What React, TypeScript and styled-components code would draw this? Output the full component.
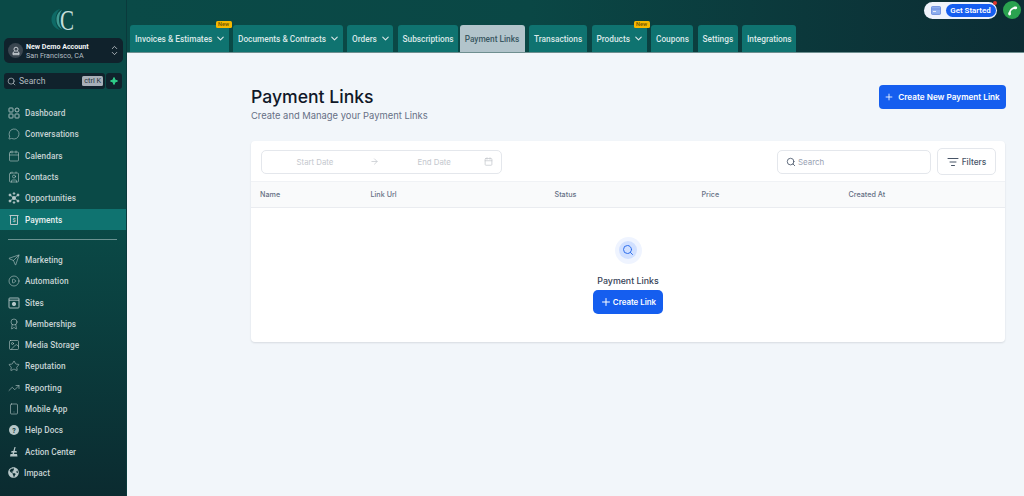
import React from "react";
import styled, { createGlobalStyle } from "styled-components";
import {
  MessageCircle, Calendar, Contact, Send, CirclePlay, Award, Image, Star,
  TrendingUp, Smartphone, ChevronDown, ChevronUp, Search, Plus, ArrowRight, ListFilter,
} from "lucide-react";
import { FaGlobeAmericas } from "react-icons/fa";

const Global = createGlobalStyle`
  html, body { margin: 0; padding: 0; height: 100%; }
  body { font-family: "Inter", "Liberation Sans", sans-serif; background: #f2f6fa; overflow: hidden; }
  #root { height: 100%; }
  * { box-sizing: border-box; }
`;

const Page = styled.div`
  display: grid;
  grid-template-columns: 127px 1fr;
  width: 1024px;
  height: 496px;
`;
const Sidebar = styled.aside`
  display: flex;
  flex-direction: column;
  background: linear-gradient(180deg, #0a4a47 0%, #0a4a47 45%, #0b2b30 100%);
  border-right: 1px solid #0a3a3c;
`;
const LogoBox = styled.div`
  height: 38px;
  display: flex;
  justify-content: center;
  padding: 1px 0 0 0;
`;
const Account = styled.div`
  margin: 0 4px;
  height: 25px;
  width: 119px;
  background: #10222c;
  border-radius: 5px;
  display: flex;
  align-items: center;
  padding: 0 4px;
  gap: 3px;
`;
const Avatar = styled.div`
  width: 15px;
  height: 15px;
  border-radius: 50%;
  background: #3a4650;
  color: #d8dee2;
  display: flex;
  align-items: center;
  justify-content: center;
  flex: none;
`;
const AccountText = styled.div`
  flex: 1;
  min-width: 0;
  font-family: "Roboto", sans-serif;
  line-height: 9px;
`;
const AccountName = styled.div`
  font-size: 7.1px;
  font-weight: 700;
  color: #f2f5f6;
  white-space: nowrap;
`;
const AccountCity = styled.div`
  font-size: 7.2px;
  color: #b4bfc4;
  white-space: nowrap;
`;
const Stepper = styled.div`
  display: flex;
  flex-direction: column;
  color: #d4dadd;
  svg { margin: -1.5px 0; }
`;
const SearchRow = styled.div`
  margin: 10px 4px 0;
  display: flex;
  gap: 1px;
  height: 16px;
`;
const SideSearch = styled.div`
  width: 102px;
  background: #10222c;
  border-radius: 3px;
  display: flex;
  align-items: center;
  padding: 0 2px 0 3px;
  gap: 3px;
  color: #b0babf;
  font: 400 8.6px "Roboto", sans-serif;
`;
const SearchLabel = styled.span`
  flex: 1;
`;
const Kbd = styled.span`
  background: #a8afb8;
  color: #27313a;
  border-radius: 1.5px;
  font-size: 7.3px;
  line-height: 10px;
  padding: 0 2px;
  white-space: nowrap;
`;
const Spark = styled.div`
  width: 16px;
  background: #10222c;
  border-radius: 3px;
  display: flex;
  align-items: center;
  justify-content: center;
`;
const Nav = styled.nav`
  margin-top: 13.5px;
  display: flex;
  flex-direction: column;
`;
const NavItem = styled.div<{ $active?: boolean }>`
  height: 21.3px;
  display: flex;
  align-items: center;
  padding-left: 8px;
  gap: 5px;
  font: 500 8.25px "Roboto", sans-serif;
  letter-spacing: 0.05px;
  color: ${(p) => (p.$active ? "#e8f0f0" : "#c5d2d3")};
  background: ${(p) => (p.$active ? "#0f7370" : "transparent")};
  svg { flex: none; color: #b7c7c8; }
`;
const Divider = styled.hr`
  margin: 9px 9px 9px 8px;
  border: 0;
  height: 1px;
  background: #6b9291;
`;
const Main = styled.main`
  display: flex;
  flex-direction: column;
  min-width: 0;
`;
const Topbar = styled.header`
  height: 53px;
  background: linear-gradient(90deg, #0a4a47 0%, #0a4745 45%, #0c2c33 100%);
  border-bottom: 1px solid #6f8f90;
  display: flex;
  align-items: flex-end;
  position: relative;
  padding-left: 3px;
`;
const Tabs = styled.div`
  display: flex;
  gap: 4.5px;
`;
const Tab = styled.div<{ $active?: boolean; $w: number }>`
  position: relative;
  width: ${(p) => p.$w}px;
  height: 27px;
  margin-left: ${(p) => (p.$active ? -2.5 : 0)}px;
  border-radius: 3px 3px 0 0;
  background: ${(p) => (p.$active ? "#b2c4cb" : "#0f7370")};
  color: ${(p) => (p.$active ? "#3a5862" : "#dbe8e8")};
  font: 500 8.3px "Roboto", sans-serif;
  display: flex;
  align-items: center;
  justify-content: ${(p) => (p.$active ? "center" : "flex-start")};
  padding-left: ${(p) => (p.$active ? 0 : 5)}px;
  gap: 3px;
  white-space: nowrap;
  svg { flex: none; }
`;
const NewBadge = styled.span`
  position: absolute;
  top: -4px;
  right: -3px;
  width: 16px;
  height: 7px;
  background: #f5b800;
  color: #6b5200;
  border-radius: 1.5px;
  font-size: 5.5px;
  line-height: 7px;
  text-align: center;
`;
const TopActions = styled.div`
  position: absolute;
  top: 1px;
  right: 3px;
  display: flex;
  align-items: center;
  gap: 6px;
`;
const StartPill = styled.div`
  position: relative;
  height: 17px;
  width: 73px;
  background: #eef3fb;
  border-radius: 9px;
  display: flex;
  align-items: center;
  justify-content: space-between;
  padding: 0 1.5px 0 7px;
  color: #5b7fd8;
`;
const StartButton = styled.span`
  height: 13px;
  width: 50px;
  border-radius: 7px;
  background: #155eef;
  color: #fff;
  font: 600 7.9px "Roboto", sans-serif;
  text-align: center;
  line-height: 13px;
`;
const RedDot = styled.span`
  position: absolute;
  top: -1px;
  right: 0;
  width: 4px;
  height: 4px;
  border-radius: 50%;
  background: #e0342c;
`;
const CallButton = styled.div`
  width: 18px;
  height: 18px;
  border-radius: 50%;
  background: #2aa24f;
  color: #fff;
  display: flex;
  align-items: center;
  justify-content: center;
`;
const Content = styled.div`
  padding: 33px 19px 0 124px;
  display: flex;
  flex-direction: column;
`;
const Head = styled.div`
  display: flex;
  justify-content: space-between;
  align-items: flex-start;
  height: 55px;
`;
const TitleBlock = styled.div`
  display: flex;
  flex-direction: column;
`;
const Title = styled.h1`
  margin: 0;
  font-size: 17.6px;
  line-height: 22px;
  font-weight: 500;
  color: #101828;
`;
const Subtitle = styled.p`
  margin: 1px 0 0;
  font-size: 9.4px;
  line-height: 13px;
  color: #667085;
`;
const PrimaryButton = styled.button`
  display: inline-flex;
  align-items: center;
  justify-content: center;
  border: 0;
  padding: 0;
  background: #155eef;
  color: #fff;
  font-family: inherit;
  font-weight: 600;
  border-radius: 4px;
  white-space: nowrap;
`;
const CreateNew = styled(PrimaryButton)`
  width: 127px;
  height: 24px;
  gap: 4px;
  font-size: 8.2px;
  margin: -1px -0.5px 0 0;
`;
const Card = styled.section`
  height: 201px;
  background: #fff;
  border-radius: 4px;
  box-shadow: 0 1px 2px rgba(16, 24, 40, 0.12);
  display: flex;
  flex-direction: column;
`;
const Toolbar = styled.div`
  height: 40px;
  display: flex;
  align-items: center;
  padding: 1px 9px 0 9.5px;
`;
const DateRange = styled.div`
  width: 241.5px;
  height: 24px;
  border: 1px solid #e4e7ec;
  border-radius: 5px;
  display: grid;
  grid-template-columns: 107px 12px 95px 1fr;
  align-items: center;
  padding-right: 8px;
  color: #c4c8ce;
  font-size: 7.8px;
  svg:last-child { justify-self: end; }
`;
const DateText = styled.span`
  text-align: center;
`;
const EndText = styled.span`
  padding-left: 37px;
  white-space: nowrap;
`;
const ArrowCell = styled.span`
  display: flex;
  justify-content: center;
`;
const ToolbarSpacer = styled.div`
  flex: 1;
`;
const TableSearch = styled.div`
  width: 154px;
  height: 24px;
  border: 1px solid #e4e7ec;
  border-radius: 5px;
  display: flex;
  align-items: center;
  padding-left: 8px;
  gap: 2px;
  color: #98a2b3;
  font-size: 7.9px;
  margin-right: 6px;
  svg { color: #475467; }
`;
const FilterButton = styled.div`
  width: 59px;
  height: 27px;
  border: 1px solid #e4e7ec;
  border-radius: 5px;
  display: flex;
  align-items: center;
  justify-content: center;
  gap: 3px;
  color: #475467;
  font-size: 8.4px;
  font-weight: 500;
`;
const TableHead = styled.div`
  height: 27px;
  background: #f9fafb;
  border-top: 1px solid #f0f2f5;
  border-bottom: 1px solid #eaecf0;
  display: grid;
  grid-template-columns: 110.5px 184px 147px 147px 1fr;
  align-items: center;
  padding-left: 9px;
  font-size: 7.2px;
  font-weight: 500;
  color: #667085;
`;
const Empty = styled.div`
  display: flex;
  flex-direction: column;
  align-items: center;
  padding-top: 28.5px;
`;
const Halo = styled.div`
  width: 27px;
  height: 27px;
  border-radius: 50%;
  background: #eff4ff;
  display: flex;
  align-items: center;
  justify-content: center;
`;
const HaloInner = styled.div`
  width: 18px;
  height: 18px;
  border-radius: 50%;
  background: #d1e0ff;
  display: flex;
  align-items: center;
  justify-content: center;
  color: #2f6fed;
`;
const EmptyTitle = styled.div`
  margin-top: 11px;
  font-size: 8.8px;
  line-height: 12px;
  font-weight: 500;
  color: #344054;
`;
const CreateLink = styled(PrimaryButton)`
  margin-top: 3px;
  width: 70px;
  height: 24px;
  gap: 1px;
  font-size: 7.9px;
  border-radius: 5px;
`;

const Glyph = ({ children }: { children: React.ReactNode }) => (
  <svg width="12" height="12" viewBox="0 0 12 12" fill="none" stroke="currentColor" strokeWidth="0.9">{children}</svg>
);

const DashIcon = () => (
  <Glyph>
    <rect x="1" y="1" width="4" height="4" rx="0.6" />
    <circle cx="9" cy="3" r="2" />
    <rect x="1" y="7" width="4" height="4" rx="0.6" />
    <rect x="7" y="7" width="4" height="4" rx="0.6" />
  </Glyph>
);
const OppIcon = () => (
  <Glyph>
    <circle cx="6" cy="6" r="1.5" fill="currentColor" />
    <circle cx="2" cy="3" r="1" fill="currentColor" />
    <circle cx="2" cy="9" r="1" fill="currentColor" />
    <circle cx="10" cy="3" r="1" fill="currentColor" />
    <circle cx="10" cy="9" r="1" fill="currentColor" />
    <circle cx="6" cy="1.5" r="0.8" fill="currentColor" />
    <circle cx="6" cy="10.5" r="0.8" fill="currentColor" />
    <path d="M2 3 10 9M10 3 2 9" />
  </Glyph>
);
const PayIcon = () => (
  <svg width="12" height="12" viewBox="0 0 12 12" fill="none" stroke="currentColor" strokeWidth="1">
    <path d="M1.5 1.5h9M2.5 1.5v9h7v-9" />
    <text x="6" y="8.2" fontSize="5.5" textAnchor="middle" fill="currentColor" stroke="none" fontFamily="Roboto" fontWeight="700">$</text>
  </svg>
);
const ActionIcon = () => (
  <svg width="12" height="12" viewBox="0 0 12 12" fill="currentColor">
    <path d="M6.5 1 5.3 5H3.6L3 6.5h1.9L4.5 8H2.5L2 10.5h7.5L9 8H6l.4-1.5H9L8.5 5H6.7l.9-4Z" />
  </svg>
);
const HelpIcon = () => (
  <svg width="12" height="12" viewBox="0 0 12 12">
    <circle cx="6" cy="6" r="5" fill="currentColor" />
    <text x="6" y="8.6" fontSize="7" textAnchor="middle" fill="#0b3a3d" fontFamily="Roboto" fontWeight="700">?</text>
  </svg>
);
const SitesIcon = () => (
  <Glyph>
    <rect x="1" y="1" width="10" height="10" rx="0.8" />
    <path d="M1 3.2h10" />
    <circle cx="6" cy="7" r="1.7" fill="currentColor" />
  </Glyph>
);
const PersonIcon = () => (
  <svg width="10" height="10" viewBox="0 0 10 10" fill="none" stroke="currentColor" strokeWidth="0.9">
    <circle cx="5" cy="3.2" r="2" />
    <path d="M3.5 5.500 2 6.500v2.200h6V6.500L6.500 5.500" />
    <path d="M2.200 7.400h5.600" />
  </svg>
);
const CardIcon = () => (
  <svg width="10" height="9" viewBox="0 0 10 9">
    <rect x="0.4" y="0.6" width="9.2" height="7.8" rx="1" fill="#8fb0ee" stroke="#5b7fd8" strokeWidth="0.8" />
    <path d="M0.6 3h8.800" stroke="#5b7fd8" strokeWidth="0.8" />
    <path d="M2 5.500h3" stroke="#eef3fb" strokeWidth="0.9" />
  </svg>
);
const Handset = () => (
  <svg width="11" height="11" viewBox="0 0 11 11" fill="none" stroke="#fff" strokeLinecap="round">
    <path d="M2.600 8.600C2.600 5.400 5 3 8.200 2.800" strokeWidth="1.7" />
    <path d="M2.600 8.400v.6M7.800 2.800h1" strokeWidth="2.800" />
  </svg>
);
const Logo = () => (
  <svg width="40" height="36" viewBox="-5 -3 40 36">
    <path d="M12 5C6 7 3.500 11 3.500 15.500S6 24 12 26C9 23 7.500 19.500 7.500 15.500S9 8 12 5Z" fill="#0e6a66" />
    <path d="M14 6C10 8 8.500 11.500 8.500 15.500S10 23 14 25c-2-2.500-3-6-3-9.500S12 8.500 14 6Z" fill="#3f9a92" />
    <text x="12" y="25.500" textLength="14" lengthAdjust="spacingAndGlyphs" fontFamily="Liberation Serif, serif" fontSize="30" fill="#c4dedb">C</text>
  </svg>
);

const primary: [string, React.ReactNode][] = [
  ["Dashboard", <DashIcon />],
  ["Conversations", <MessageCircle size={12} strokeWidth={1.2} />],
  ["Calendars", <Calendar size={12} strokeWidth={1.2} />],
  ["Contacts", <Contact size={12} strokeWidth={1.2} />],
  ["Opportunities", <OppIcon />],
];
const secondary: [string, React.ReactNode][] = [
  ["Marketing", <Send size={12} strokeWidth={1.2} />],
  ["Automation", <CirclePlay size={12} strokeWidth={1.2} />],
  ["Sites", <SitesIcon />],
  ["Memberships", <Award size={12} strokeWidth={1.2} />],
  ["Media Storage", <Image size={12} strokeWidth={1.2} />],
  ["Reputation", <Star size={12} strokeWidth={1.2} />],
  ["Reporting", <TrendingUp size={12} strokeWidth={1.2} />],
  ["Mobile App", <Smartphone size={12} strokeWidth={1.2} />],
  ["Help Docs", <HelpIcon />],
  ["Action Center", <ActionIcon />],
  ["Impact", <FaGlobeAmericas size={11} />],
];
const tabs = [
  { label: "Invoices & Estimates", w: 98.5, chev: true, isNew: true },
  { label: "Documents & Contracts", w: 109.5, chev: true },
  { label: "Orders", w: 46, chev: true },
  { label: "Subscriptions", w: 60 },
  { label: "Payment Links", w: 65, active: true },
  { label: "Transactions", w: 58 },
  { label: "Products", w: 55, chev: true, isNew: true },
  { label: "Coupons", w: 42 },
  { label: "Settings", w: 40 },
  { label: "Integrations", w: 54 },
];
const columns = ["Name", "Link Url", "Status", "Price", "Created At"];

export default function App() {
  return (
    <Page>
      <Global />
      <Sidebar>
        <LogoBox><Logo /></LogoBox>
        <Account>
          <Avatar><PersonIcon /></Avatar>
          <AccountText>
            <AccountName>New Demo Account</AccountName>
            <AccountCity>San Francisco, CA</AccountCity>
          </AccountText>
          <Stepper>
            <ChevronUp size={9} strokeWidth={2} />
            <ChevronDown size={9} strokeWidth={2} />
          </Stepper>
        </Account>
        <SearchRow>
          <SideSearch>
            <Search size={9} />
            <SearchLabel>Search</SearchLabel>
            <Kbd>ctrl K</Kbd>
          </SideSearch>
          <Spark>
            <svg width="8" height="8" viewBox="0 0 8 8"><path d="M4 .5 5 3 7.500 4 5 5 4 7.500 3 5 .5 4 3 3Z" fill="#2fd08a" stroke="#2fd08a" strokeWidth="1" strokeLinejoin="round" /></svg>
          </Spark>
        </SearchRow>
        <Nav>
          {primary.map(([label, icon]) => (
            <NavItem key={label}>{icon}{label}</NavItem>
          ))}
          <NavItem $active><PayIcon />Payments</NavItem>
          <Divider />
          {secondary.map(([label, icon]) => (
            <NavItem key={label}>{icon}{label}</NavItem>
          ))}
        </Nav>
      </Sidebar>
      <Main>
        <Topbar>
          <Tabs>
            {tabs.map((t) => (
              <Tab key={t.label} $active={t.active} $w={t.w}>
                {t.label}
                {t.chev && <ChevronDown size={11} strokeWidth={2.4} />}
                {t.isNew && <NewBadge>New</NewBadge>}
              </Tab>
            ))}
          </Tabs>
          <TopActions>
            <StartPill>
              <CardIcon />
              <StartButton>Get Started</StartButton>
              <RedDot />
            </StartPill>
            <CallButton><Handset /></CallButton>
          </TopActions>
        </Topbar>
        <Content>
          <Head>
            <TitleBlock>
              <Title>Payment Links</Title>
              <Subtitle>Create and Manage your Payment Links</Subtitle>
            </TitleBlock>
            <CreateNew><Plus size={10} />Create New Payment Link</CreateNew>
          </Head>
          <Card>
            <Toolbar>
              <DateRange>
                <DateText>Start Date</DateText>
                <ArrowCell><ArrowRight size={9} /></ArrowCell>
                <EndText>End Date</EndText>
                <Calendar size={9} />
              </DateRange>
              <ToolbarSpacer />
              <TableSearch><Search size={10} />Search</TableSearch>
              <FilterButton><ListFilter size={12} />Filters</FilterButton>
            </Toolbar>
            <TableHead>
              {columns.map((c) => <span key={c}>{c}</span>)}
            </TableHead>
            <Empty>
              <Halo><HaloInner><Search size={12} /></HaloInner></Halo>
              <EmptyTitle>Payment Links</EmptyTitle>
              <CreateLink><Plus size={12} />Create Link</CreateLink>
            </Empty>
          </Card>
        </Content>
      </Main>
    </Page>
  );
}
